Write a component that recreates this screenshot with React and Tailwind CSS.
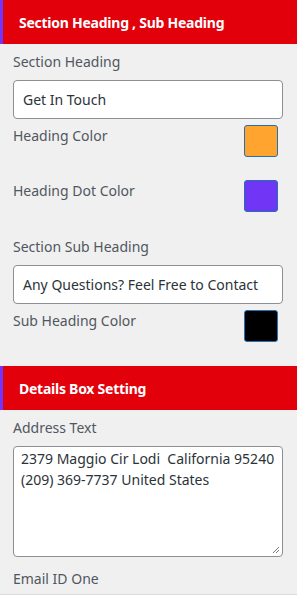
const font = { fontFamily: '"Noto Sans", "Open Sans", sans-serif' }

function Bar({ title }) {
  return (
    <div className="flex h-[44px] items-center border-l-[3px] border-[#7036f6] bg-[#e2000b] pl-4">
      <span className="text-[14px] font-bold tracking-[-0.25px] text-white">{title}</span>
    </div>
  )
}

function Label({ children, className = '' }) {
  return <div className={`text-[14px] leading-[21px] text-[#50575e] ${className}`}>{children}</div>
}

function TextInput({ value }) {
  return (
    <div className="flex h-[39px] items-center rounded-[4px] border border-[#8c8f94] bg-white px-[9px] text-[14px] text-[#2c3338]">
      {value}
    </div>
  )
}

function ColorRow({ label, color }) {
  return (
    <div className="flex items-start justify-between pr-[6px]">
      <Label>{label}</Label>
      <div className="h-[32px] w-[34px] rounded-[3px] border border-[#2271b1]" style={{ background: color }} />
    </div>
  )
}

export default function App() {
  return (
    <div className="h-[595px] w-[297px] overflow-hidden bg-[#f0f0f0]" style={font}>
      <Bar title="Section Heading , Sub Heading" />
      <div className="px-[13px] pt-[7px]">
        <Label>Section Heading</Label>
        <div className="mt-[8px] mr-[1px]">
          <TextInput value="Get In Touch" />
        </div>
        <div className="mt-[6px]">
          <ColorRow label="Heading Color" color="#ffa52f" />
        </div>
        <div className="mt-[23px]">
          <ColorRow label="Heading Dot Color" color="#7035f5" />
        </div>
        <Label className="mt-[24px]">Section Sub Heading</Label>
        <div className="mt-[8px] mr-[1px]">
          <TextInput value="Any Questions? Feel Free to Contact" />
        </div>
        <div className="mt-[6px]">
          <ColorRow label="Sub Heading Color" color="#000000" />
        </div>
      </div>
      <div className="mt-[24px]">
        <Bar title="Details Box Setting" />
      </div>
      <div className="px-[13px] pt-[7px]">
        <Label>Address Text</Label>
        <div className="relative mt-[8px] mr-[1px] h-[111px] rounded-[4px] border border-[#8c8f94] bg-white px-[7px] pt-[1px] text-[14px] leading-[21px] text-[#2c3338]">
          <div>2379 Maggio Cir Lodi&nbsp; California 95240</div>
          <div>(209) 369-7737 United States</div>
          <svg className="absolute bottom-[2px] right-[2px]" width="8" height="8" viewBox="0 0 8 8">
            <path d="M7 1 L1 7 M7 4 L4 7" stroke="#777" strokeWidth="1" />
          </svg>
        </div>
        <Label className="mt-[11px]">Email ID One</Label>
      </div>
      <div className="mt-[5px] border-t border-[#dcdcde]" />
    </div>
  )
}
